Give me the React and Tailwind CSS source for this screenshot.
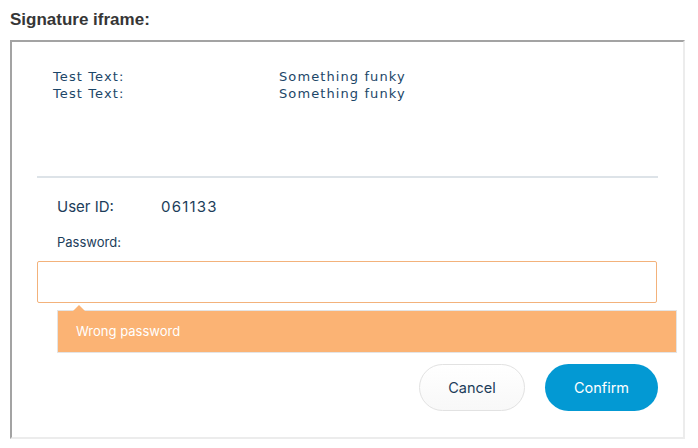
import React from 'react';

const rows = [
    { label: 'Test Text:', value: 'Something funky' },
    { label: 'Test Text:', value: 'Something funky' },
];

const App = () => {
    return (
        <div className="w-[698px] h-[448px] bg-white font-['Liberation_Sans',Arial,sans-serif]">
            {/* Title */}
            <div className="h-[40px] pl-[10px] flex items-center">
                <h2 className="text-[17px] font-bold text-[#363636] leading-none -mt-[1px]">Signature iframe:</h2>
            </div>

            {/* Iframe box */}
            <div className="ml-[10px] w-[675px] h-[399px] border-2 border-t-[#a3a3a3] border-l-[#a3a3a3] border-r-[#ececec] border-b-[#ececec] bg-white">
                {/* Data rows */}
                <div className="pt-[26px] pl-[41px] font-['DejaVu_Sans',Verdana,sans-serif] text-[13px] tracking-[1.1px] text-[#1c4668] leading-[17px]">
                    {rows.map((r, i) => (
                        <div key={i} className="flex">
                            <span className="w-[226px]">{r.label}</span>
                            <span>{r.value}</span>
                        </div>
                    ))}
                </div>

                <div className="px-[25px]">
                    <div className="mt-[74px] h-[2px] bg-[#dde3e8]" />

                    {/* Form */}
                    <div className="font-['Inter',sans-serif] text-[#1c3d5a]">
                        <div className="mt-[19px] pl-[20px] flex items-center h-[20px] text-[15px]">
                            <span className="w-[104px]">User ID:</span>
                            <span className="tracking-[1.2px]">061133</span>
                        </div>

                        <div className="mt-[18px] pl-[20px] h-[16px] flex items-center text-[13px]">
                            Password:
                        </div>

                        <input
                            type="password"
                            className="mt-[10px] block w-[620px] h-[42px] border border-[#f3b27b] rounded-[2px] outline-none px-3"
                        />

                        {/* Error bubble */}
                        <div className="relative mt-[7px] ml-[20px] w-[620px] h-[43px] bg-[#fbb374] border border-[#e4e4e4] flex items-center pl-[18px] text-[13px] text-white">
                            <span className="absolute -top-[6px] left-[15px] w-0 h-0 border-l-[6px] border-r-[6px] border-b-[6px] border-l-transparent border-r-transparent border-b-[#fbb374]" />
                            Wrong password
                        </div>

                        {/* Buttons */}
                        <div className="mt-[11px] flex justify-end gap-[20px]">
                            <button className="w-[106px] h-[47px] rounded-full border border-[#e2e2e2] bg-gradient-to-b from-white to-[#f8f8f8] text-[14.5px] text-[#1c3d5a]">
                                Cancel
                            </button>
                            <button className="w-[113px] h-[47px] rounded-full bg-[#0399d3] text-[14.5px] text-white">
                                Confirm
                            </button>
                        </div>
                    </div>
                </div>
            </div>
        </div>
    );
};

export default App;
